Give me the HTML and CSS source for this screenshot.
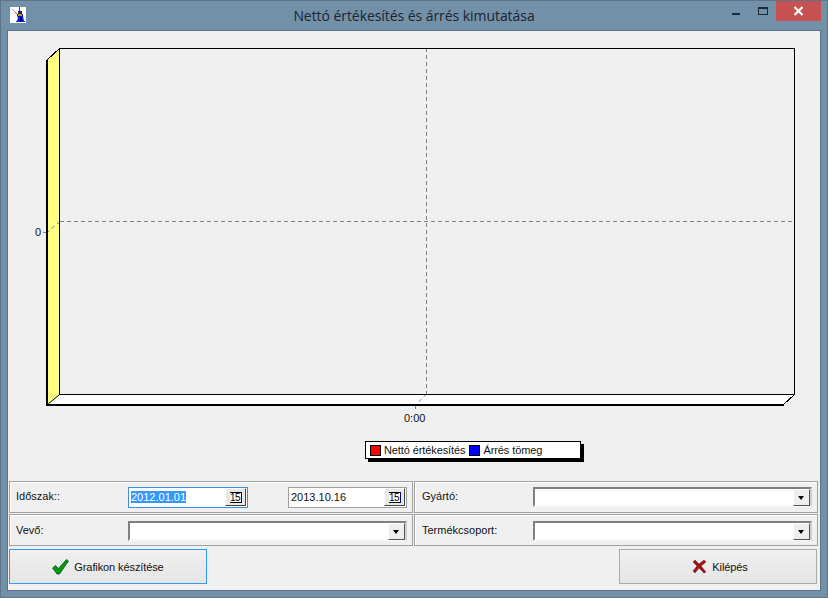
FILE: index.html
```html
<!DOCTYPE html>
<html lang="hu">
<head>
  <meta charset="UTF-8">
  <title>Nettó értékesítés és árrés kimutatása</title>
  <link rel="stylesheet" href="styles.css">
</head>
<body>
  <div class="window">
    <div class="titlebar">
      <svg class="app-icon" width="16" height="16" viewBox="0 0 16 16">
        <rect width="16" height="16" fill="#fff"/>
        <path d="M2 2l3 3" stroke="#d8a0a0" fill="none"/>
        <path d="M5 5l3 3" stroke="#806040" fill="none"/>
        <path d="M9.5 0v4" stroke="#3040a0" fill="none"/>
        <rect x="8" y="4" width="4" height="3" fill="#202060"/>
        <path d="M7 7h6v2l1 5h1v1H6v-1h1l1-3-1-2z" fill="#1020c0"/>
        <rect x="8" y="7" width="4" height="2" fill="#c09020"/>
        <rect x="10" y="10" width="2" height="4" fill="#000080"/>
      </svg>
      <div class="title">Nettó értékesítés és árrés kimutatása</div>
      <div class="caption-buttons">
        <div class="btn-min"></div>
        <div class="btn-max"></div>
        <div class="btn-close">
          <svg width="11" height="10" viewBox="0 0 11 10"><path d="M1.5 1l8 8M9.5 1l-8 8" stroke="#fff" stroke-width="2.2" fill="none"/></svg>
        </div>
      </div>
    </div>

    <div class="client">
      <div class="chart">
        <svg class="chart-svg" width="809" height="450" viewBox="0 0 809 450">
          <!-- coordinates here are window coords minus 9,31 -->
          <g transform="translate(-9 -31)">
            <polygon points="47,60 60,48 60,394 47,405" fill="#ffff80"/>
            <polygon points="47,405 60,394 794,394 783,405" fill="#fff"/>
            <path d="M426.5 48V394M426.5 394L415.5 405M415.5 405V411" stroke="#808080" stroke-dasharray="4 3" fill="none"/>
            <path d="M60 221.5H794M60 221.5L47 232.5" stroke="#808080" stroke-dasharray="4 3" fill="none"/>
            <path d="M43 232.5H47" stroke="#808080" fill="none"/>
            <path d="M60 48.5H794.5V394.5H59.5V48M59.5 48.5L47 60M794.5 394.5L783 405" stroke="#000" fill="none" shape-rendering="crispEdges"/>
            <path d="M47 60V405H784" stroke="#000" stroke-width="2" fill="none" shape-rendering="crispEdges"/>
            <path d="M59.5 394.5L47 405" stroke="#000" fill="none"/>
          </g>
        </svg>
        <span class="axis-label axis-y">0</span>
        <span class="axis-label axis-x">0:00</span>
        <div class="legend">
          <span class="swatch swatch-red"></span><span>Nettó értékesítés</span>
          <span class="swatch swatch-blue"></span><span>Árrés tömeg</span>
        </div>
      </div>

      <div class="filters">
        <div class="panel">
          <label class="lbl">Időszak::</label>
          <div class="date-input focused"><span class="selected">2012.01.01</span><button class="cal-btn"><span class="cal-icon">15</span></button></div>
          <div class="date-input second"><span>2013.10.16</span><button class="cal-btn"><span class="cal-icon">15</span></button></div>
        </div>
        <div class="panel">
          <label class="lbl">Gyártó:</label>
          <div class="combo"><button class="combo-btn"></button></div>
        </div>
        <div class="panel low">
          <label class="lbl">Vevő:</label>
          <div class="combo"><button class="combo-btn"></button></div>
        </div>
        <div class="panel low">
          <label class="lbl">Termékcsoport:</label>
          <div class="combo"><button class="combo-btn"></button></div>
        </div>
      </div>

      <div class="actions">
        <button class="action primary">
          <svg width="17" height="16" viewBox="0 0 17 16"><path d="M0.500 9l3-2.500 3 3 8-9 2 1.500-9 13h-2.500z" fill="#00a000" stroke="#0a2a4a" stroke-width=".7"/></svg>
          Grafikon készítése
        </button>
        <button class="action exit">
          <svg width="15" height="15" viewBox="0 0 15 15"><path d="M1 3l2-2 4 4 5-4 2 2-5 4 5 6-2 1-5-5-4 5-2-2 4-5z" fill="#a01010" stroke="#602020" stroke-width=".5"/></svg>
          Kilépés
        </button>
      </div>
    </div>
  </div>
</body>
</html>
```

FILE: styles.css
```css
html, body {
  margin: 0;
  padding: 0;
}
body {
  width: 828px;
  height: 598px;
  overflow: hidden;
  font-family: 'Liberation Sans', Arial, sans-serif;
  font-size: 11px;
  color: #111;
}
.window {
  height: 598px;
  box-sizing: border-box;
  background-color: #7390a9;
  border-top: 1px solid #5d7389;
  box-shadow: inset 1px 0 0 #5d7389, inset -1px 0 0 #5d7389, inset 0 -1px 0 #5d7389;
  display: flex;
  flex-direction: column;
}
.titlebar {
  height: 29px;
  position: relative;
  flex: none;
}
.app-icon {
  position: absolute;
  left: 10px;
  top: 6px;
}
.title {
  text-align: center;
  font-family: 'Open Sans', sans-serif;
  font-size: 14px;
  letter-spacing: -0.06px;
  line-height: 30px;
  color: #1a2430;
}
.caption-buttons {
  position: absolute;
  top: 0;
  left: 732px;
  display: flex;
  align-items: flex-start;
}
.btn-min {
  width: 8px;
  height: 2px;
  margin-top: 12px;
  background-color: #1f2a35;
}
.btn-max {
  width: 8px;
  height: 5px;
  margin: 6px 0 0 18px;
  border: 1px solid #1f2a35;
  border-top-width: 2px;
}
.btn-close {
  width: 45px;
  height: 20px;
  margin-left: 8px;
  background-color: #c75050;
  display: flex;
  align-items: center;
  justify-content: center;
}
.client {
  width: 814px;
  height: 561px;
  margin-left: 7px;
  box-sizing: border-box;
  border: 1px solid #5d7389;
  background-color: #f0f0f0;
  padding: 0 0 0 1px;
  display: flex;
  flex-direction: column;
}
.chart {
  height: 450px;
  position: relative;
  flex: none;
}
.chart-svg {
  display: block;
}
.axis-label {
  position: absolute;
  font-size: 11px;
  line-height: 12px;
  color: #111;
}
.axis-y {
  left: 26px;
  top: 195px;
}
.axis-x {
  left: 395px;
  top: 381px;
}
.legend {
  position: absolute;
  left: 356px;
  top: 410px;
  width: 210px;
  height: 16px;
  background: #fff;
  border: 1px solid #000;
  box-shadow: 3px 3px 0 #000;
  display: flex;
  align-items: center;
  padding-left: 4px;
  letter-spacing: -0.1px;
}
.swatch {
  width: 9px;
  height: 9px;
  border: 1px solid #000;
  margin-right: 3px;
}
.swatch + span + .swatch {
  margin: 0 3px 0 4px;
}
.swatch-red {
  background-color: #f00;
}
.swatch-blue {
  background-color: #00f;
}
.filters {
  display: grid;
  grid-template-columns: 404px 404px;
  grid-auto-rows: 32px;
  gap: 1px;
}
.panel {
  border: 1px solid #a0a0a0;
  box-shadow: inset 1px 1px 0 #fff;
  display: flex;
  align-items: center;
  box-sizing: border-box;
}
.panel.low {
  padding-top: 1px;
}
.lbl {
  width: 118px;
  padding-left: 6px;
  margin-bottom: 2px;
  flex: none;
  box-sizing: border-box;
}
.panel:nth-child(even) .lbl {
  padding-left: 7px;
}
.date-input {
  width: 120px;
  height: 21px;
  box-sizing: border-box;
  border: 1px solid #a0a0a0;
  background: #fff;
  display: flex;
  align-items: center;
  justify-content: space-between;
  padding: 0 1px 0 2px;
}
.date-input.focused {
  border-color: #3f8fe0;
}
.date-input.second {
  width: 119px;
  margin-left: 40px;
}
.selected {
  background-color: #3399ff;
  color: #fff;
}
.cal-btn {
  width: 21px;
  height: 18px;
  padding: 0;
  border: 1px solid;
  border-color: #fff #444 #444 #fff;
  background: #e8e8e8;
  display: flex;
  align-items: center;
  justify-content: center;
}
.cal-icon {
  width: 12px;
  height: 11px;
  box-sizing: border-box;
  background: #fff;
  border-top: 1px solid #000;
  border-right: 1px solid #000080;
  border-bottom: 1px solid #000;
  font: 10px/9px 'Liberation Sans', sans-serif;
  letter-spacing: -0.5px;
  color: #000;
  text-align: center;
}
.combo {
  width: 279px;
  height: 20px;
  box-sizing: border-box;
  background: #fff;
  border: 2px solid;
  border-color: #808080 #d0d0d0 #f8f8f8 #808080;
  display: flex;
  justify-content: flex-end;
}
.combo-btn {
  width: 17px;
  height: 17px;
  padding: 0;
  border: 1px solid;
  border-color: #fff #555 #555 #fff;
  background: #eee;
  position: relative;
}
.combo-btn::after {
  content: '';
  position: absolute;
  left: 4px;
  top: 6px;
  border-left: 3.5px solid transparent;
  border-right: 3.5px solid transparent;
  border-top: 4px solid #000;
}
.actions {
  display: flex;
  justify-content: space-between;
  margin-top: 3px;
  width: 808px;
}
.action {
  width: 198px;
  height: 35px;
  box-sizing: border-box;
  border: 1px solid #acacac;
  background: linear-gradient(#f0f0f0, #e5e5e5);
  display: flex;
  align-items: center;
  justify-content: center;
  gap: 5px;
  font: 11px 'Liberation Sans', sans-serif;
  letter-spacing: -0.1px;
  color: #111;
  padding: 0;
}
.action.primary {
  border-color: #3399ff;
}
.action.exit {
  padding-left: 4px;
}
```
